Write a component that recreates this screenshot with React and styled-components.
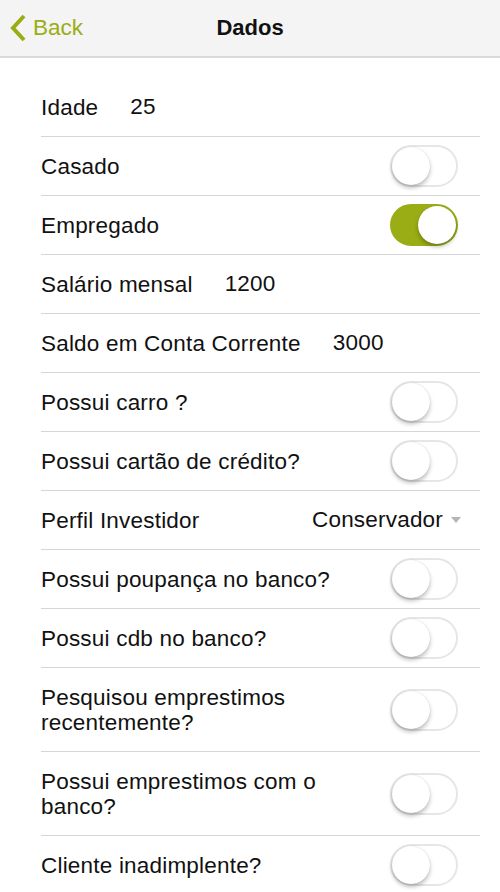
import React from 'react';
import styled, { createGlobalStyle } from 'styled-components';

const GlobalStyle = createGlobalStyle`
  body {
    margin: 0;
    background: #ffffff;
    font-family: "Liberation Sans", Arial, sans-serif;
    color: #111111;
  }
`;

const Screen = styled.div`
  width: 500px;
  height: 892px;
  overflow: hidden;
  background: #ffffff;
`;

const NavBar = styled.div`
  height: 56px;
  background: #f4f4f4;
  border-bottom: 2px solid #d9d9d9;
  display: grid;
  grid-template-columns: 1fr auto 1fr;
  align-items: center;
`;

const BackButton = styled.button`
  justify-self: start;
  display: flex;
  align-items: center;
  gap: 6px;
  padding: 0 0 0 9px;
  border: none;
  background: none;
  color: #9aad14;
  font-family: inherit;
  font-size: 22.5px;
  cursor: pointer;
`;

const Title = styled.div`
  font-size: 22px;
  font-weight: bold;
  color: #111111;
`;

const List = styled.div`
  padding: 20px 20px 0 41px;
`;

const Row = styled.div`
  display: flex;
  align-items: center;
  min-height: ${p => (p.$tall ? 83 : 58)}px;
  border-bottom: 1px solid #d6d6d6;
  font-size: 22.5px;
  letter-spacing: 0.2px;
`;

const Label = styled.div`
  flex: ${p => (p.$grow ? 1 : 'none')};
  line-height: 25px;
`;

const Value = styled.div`
  margin-left: 32px;
  flex: 1;
`;

const SwitchTrack = styled.div`
  position: relative;
  width: 68px;
  height: 42px;
  margin-right: 22px;
  flex: none;
  border-radius: 21px;
  box-sizing: border-box;
  background: ${p => (p.$on ? '#9aad14' : '#ffffff')};
  border: 2px solid ${p => (p.$on ? '#9aad14' : '#e6e6e6')};
`;

const Knob = styled.div`
  position: absolute;
  top: 0;
  left: ${p => (p.$on ? '26px' : '0')};
  width: 38px;
  height: 38px;
  border-radius: 50%;
  background: #ffffff;
  box-shadow: 0 3px 4px rgba(0, 0, 0, 0.25), 0 0 1px rgba(0, 0, 0, 0.2);
`;

const Select = styled.div`
  display: flex;
  align-items: center;
  gap: 8px;
  margin-right: 19px;
`;

const Caret = styled.span`
  width: 0;
  height: 0;
  border-left: 5px solid transparent;
  border-right: 5px solid transparent;
  border-top: 6px solid #b5b5b5;
`;

function Switch({ on }) {
  return (
    <SwitchTrack $on={on}>
      <Knob $on={on} />
    </SwitchTrack>
  );
}

function ToggleRow({ label, on, tall }) {
  return (
    <Row $tall={tall}>
      <Label $grow>{label}</Label>
      <Switch on={on} />
    </Row>
  );
}

function ValueRow({ label, value }) {
  return (
    <Row>
      <Label>{label}</Label>
      <Value>{value}</Value>
    </Row>
  );
}

export default function App() {
  return (
    <Screen>
      <GlobalStyle />
      <NavBar>
        <BackButton>
          <svg width="18" height="28" viewBox="0 0 18 28">
            <path d="M15 2 L4 14 L15 26" fill="none" stroke="#9aad14" strokeWidth="4" />
          </svg>
          Back
        </BackButton>
        <Title>Dados</Title>
        <div />
      </NavBar>
      <List>
        <ValueRow label="Idade" value="25" />
        <ToggleRow label="Casado" />
        <ToggleRow label="Empregado" on />
        <ValueRow label="Salário mensal" value="1200" />
        <ValueRow label="Saldo em Conta Corrente" value="3000" />
        <ToggleRow label="Possui carro ?" />
        <ToggleRow label="Possui cartão de crédito?" />
        <Row>
          <Label $grow>Perfil Investidor</Label>
          <Select>
            Conservador
            <Caret />
          </Select>
        </Row>
        <ToggleRow label="Possui poupança no banco?" />
        <ToggleRow label="Possui cdb no banco?" />
        <ToggleRow label={<>Pesquisou emprestimos<br />recentemente?</>} tall />
        <ToggleRow label={<>Possui emprestimos com o<br />banco?</>} tall />
        <ToggleRow label="Cliente inadimplente?" />
      </List>
    </Screen>
  );
}
